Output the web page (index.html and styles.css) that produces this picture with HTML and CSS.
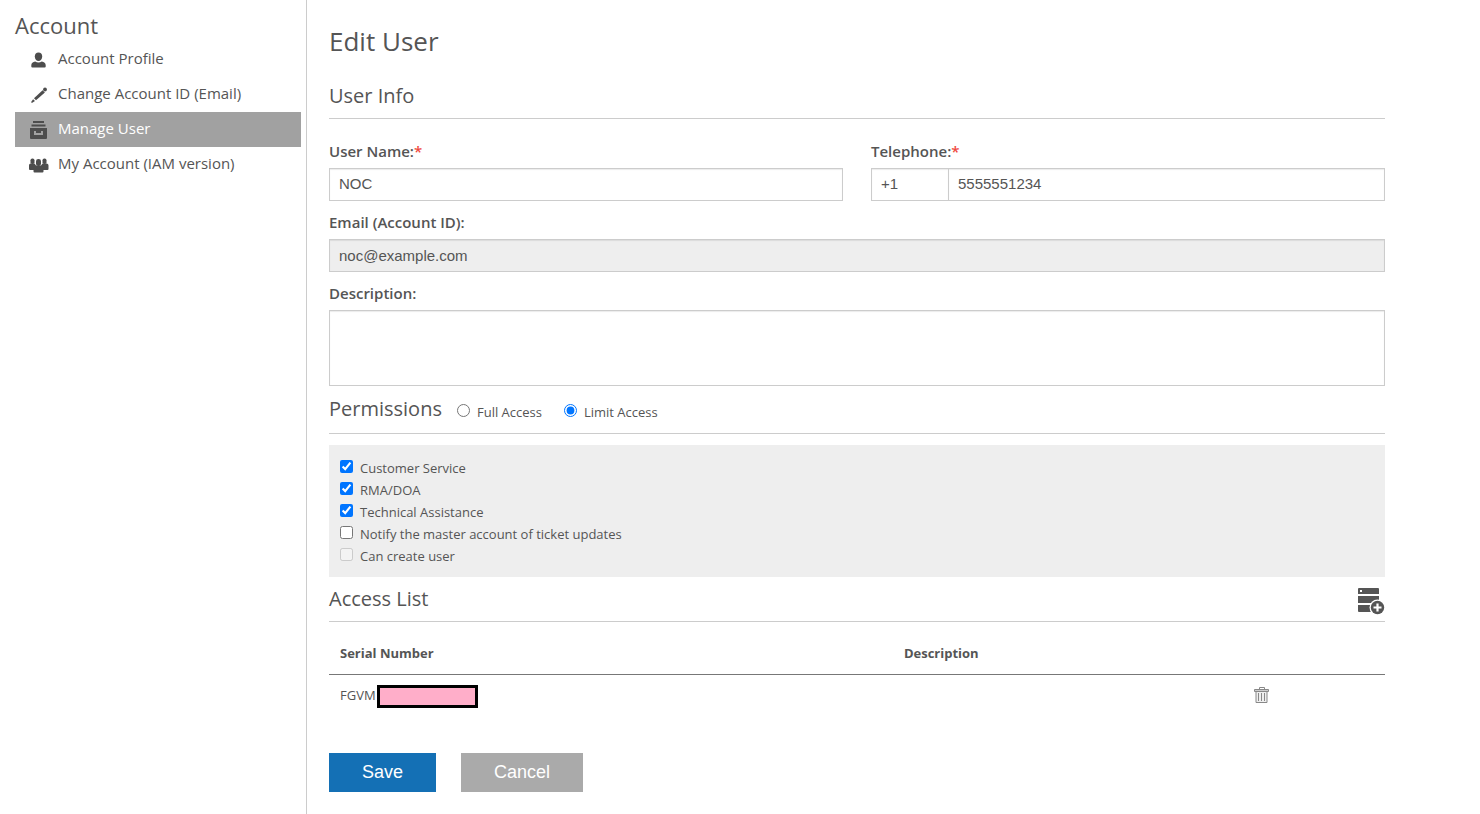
FILE: index.html
```
<!DOCTYPE html>
<html lang="en">

<head>
  <meta charset="UTF-8">
  <meta name="viewport" content="width=device-width, initial-scale=1.0">
  <title>Edit User</title>
  <link rel="stylesheet" href="styles.css">
</head>

<body>
  <div class="page">
    <aside class="sidebar">
      <h3 class="side-title">Account</h3>
      <nav class="side-menu">
        <a href="#" class="side-link">
          <svg class="side-icon" viewBox="0 0 20 20">
            <path d="M9.500 2.500c2.300 0 3.700 1.600 3.700 3.900 0 2.500-1.600 4.600-3.700 4.600S5.800 8.900 5.800 6.400c0-2.300 1.400-3.900 3.700-3.900z" />
            <path d="M2.300 16.500v-1.300c0-2.200 1.600-3.400 3.900-3.700 2 1.300 4.600 1.300 6.600 0 2.300.3 3.900 1.500 3.900 3.700v1.300a1 1 0 0 1-1 1H3.300a1 1 0 0 1-1-1z" />
          </svg>
          Account Profile
        </a>
        <a href="#" class="side-link">
          <svg class="side-icon" viewBox="0 0 20 20">
            <circle cx="16" cy="4.500" r="1.900" />
            <path d="M13.600 5.200l2.300 2.300-8.900 7.700-2-2z" />
            <path d="M4.100 14.200l1.900 1.900-2.700 1.700c-.7.300-1.400-.4-1-1z" />
          </svg>
          Change Account ID (Email)
        </a>
        <a href="#" class="side-link active">
          <svg class="side-icon" viewBox="0 0 20 20">
            <path d="M4 1h11v2H4zM2.500 4.500h14v2h-14z" />
            <path fill-rule="evenodd" d="M1 8h17v10a1 1 0 0 1-1 1H2a1 1 0 0 1-1-1zM5 11v4h9v-4h-2v2H7v-2z" />
          </svg>
          Manage User
        </a>
        <a href="#" class="side-link">
          <svg class="side-icon" viewBox="0 0 20 20">
            <rect x="1.500" y="3.500" width="4" height="5.500" rx="1.800" />
            <rect x="13.500" y="3.500" width="4" height="5.500" rx="1.800" />
            <rect x="7" y="4" width="5" height="7" rx="2.300" />
            <path d="M0 14V10.500C0 9 1 8.500 2 8.500h3.500l1.500 2h5l1.500-2H17c1.200 0 2.500.5 2.500 2V14a1 1 0 0 1-1 1h-4v1.500a1 1 0 0 1-1 1h-8a1 1 0 0 1-1-1V15H1a1 1 0 0 1-1-1z" />
          </svg>
          My Account (IAM version)
        </a>
      </nav>
    </aside>

    <main class="main">
      <form>
        <h1>Edit User</h1>

        <h2 class="section-title">User Info</h2>
        <div class="user-form">
          <div class="form-row">
            <div class="field">
              <label for="username">User Name:<span class="required">*</span></label>
              <input type="text" id="username" value="NOC" />
            </div>
            <div class="field">
              <label for="phone">Telephone:<span class="required">*</span></label>
              <div class="phone">
                <input type="text" class="code" aria-label="Country code" value="+1" />
                <input type="text" id="phone" value="5555551234" />
              </div>
            </div>
          </div>
          <div class="field">
            <label for="email">Email (Account ID):</label>
            <input type="text" id="email" value="noc@example.com" disabled />
          </div>
          <div class="field">
            <label for="description">Description:</label>
            <textarea id="description"></textarea>
          </div>
        </div>

        <div class="section-title permissions">
          <h2>Permissions</h2>
          <label class="option"><input type="radio" name="access" />Full Access</label>
          <label class="option"><input type="radio" name="access" checked />Limit Access</label>
        </div>
        <div class="permission-box">
          <label class="option"><input type="checkbox" checked />Customer Service</label>
          <label class="option"><input type="checkbox" checked />RMA/DOA</label>
          <label class="option"><input type="checkbox" checked />Technical Assistance</label>
          <label class="option"><input type="checkbox" />Notify the master account of ticket updates</label>
          <label class="option"><input type="checkbox" disabled />Can create user</label>
        </div>

        <div class="section-title access">
          <h2>Access List</h2>
          <button type="button" class="icon-btn" aria-label="Add">
            <svg width="28" height="30" viewBox="0 0 28 30">
              <path fill="#555" fill-rule="evenodd" d="M2 3h19a1 1 0 0 1 1 1v5H1V4a1 1 0 0 1 1-1zM3 5v2h2V5z" />
              <path fill="#555" d="M1 11h21v7H1zM1 20h21v7H2a1 1 0 0 1-1-1z" />
              <circle cx="20.500" cy="22.500" r="8" fill="#fff" />
              <circle cx="20.500" cy="22.500" r="6.700" fill="#555" />
              <path stroke="#fff" stroke-width="2.200" d="M20.500 18.500v8M16.500 22.500h8" />
            </svg>
          </button>
        </div>
        <table class="access-table">
          <thead>
            <tr>
              <th class="col-serial">Serial Number</th>
              <th class="col-desc">Description</th>
              <th></th>
            </tr>
          </thead>
          <tbody>
            <tr>
              <td>
                <div class="serial">FGVM<span class="mask"></span></div>
              </td>
              <td></td>
              <td>
                <button type="button" class="icon-btn" aria-label="Delete">
                  <svg width="16" height="18" viewBox="0 0 16 18">
                    <path fill="none" stroke="#888" d="M5.500 3V1.500h5V3" />
                    <path fill="#ccc" stroke="#888" d="M.5 3.500h14v2H.5z" />
                    <path fill="#eee" stroke="#888" d="M2 5.500h11v11H2z" />
                    <path stroke="#888" d="M4.500 7v8M7.500 7v8M10.500 7v8" />
                  </svg>
                </button>
              </td>
            </tr>
          </tbody>
        </table>

        <div class="actions">
          <button type="submit" class="btn save">Save</button>
          <button type="button" class="btn cancel">Cancel</button>
        </div>
      </form>
    </main>
  </div>
</body>

</html>
```
FILE: styles.css
```
* {
  padding: 0;
  margin: 0;
  box-sizing: border-box;
}

body {
  font-family: "Open Sans", "Noto Sans", sans-serif;
  font-size: 13px;
  color: #555;
  background-color: #fff;
}

.page {
  display: flex;
  min-height: 100vh;
}

/* left menu */
.sidebar {
  flex: 0 0 307px;
  padding: 9px 5px 0 15px;
  border-right: 1px solid #ccc;
}

.side-title {
  margin-bottom: 1px;
  font-size: 22px;
  font-weight: 400;
  line-height: 32px;
}

.side-link {
  display: flex;
  align-items: center;
  gap: 9px;
  height: 35px;
  padding: 0 14px 4px;
  font-size: 15px;
  color: #555;
  text-decoration: none;
}

.side-link.active {
  background-color: #a1a1a1;
  color: #fff;
}

.side-icon {
  width: 20px;
  height: 20px;
  margin-top: 4px;
  fill: #4d4d4d;
}

/* content */
.main {
  flex: 1;
  padding: 23px 95px 0 22px;
}

h1 {
  margin-bottom: 23px;
  font-size: 26px;
  font-weight: 400;
  line-height: 36px;
}

h2 {
  font-size: 20px;
  font-weight: 400;
  line-height: 28px;
}

.section-title {
  padding-bottom: 8px;
  border-bottom: 1px solid #ccc;
}

.user-form {
  display: flex;
  flex-direction: column;
  gap: 11px;
  padding: 22px 0 9px;
}

.form-row {
  display: grid;
  grid-template-columns: 1fr 1fr;
  gap: 28px;
}

.field {
  display: flex;
  flex-direction: column;
  gap: 7px;
}

.field label {
  font-size: 15px;
  font-weight: 600;
  line-height: 20px;
}

.required {
  color: #f0483e;
}

input[type=text],
textarea {
  width: 100%;
  height: 33px;
  padding: 0 9px;
  border: 1px solid #ccc;
  box-shadow: inset 0 1px 1px rgba(0, 0, 0, 0.08);
  background-color: #fff;
  font-family: "Liberation Sans", Arial, sans-serif;
  font-size: 15px;
  color: #555;
}

.form-row input[type=text] {
  padding-bottom: 2px;
}

input[type=text]:disabled {
  background-color: #eee;
}

textarea {
  display: block;
  height: 76px;
  resize: none;
}

.phone {
  display: flex;
}

.phone .code {
  flex: 0 0 77px;
  border-right: none;
}

.option {
  display: flex;
  align-items: center;
  gap: 7px;
  padding-top: 2px;
  line-height: 20px;
}

.option input {
  width: 13px;
  height: 13px;
  margin-bottom: 4px;
}

.permissions {
  display: flex;
  align-items: flex-start;
  padding-bottom: 10px;
}

.permissions .option {
  margin: 5px 7px 0 15px;
}

.permission-box {
  margin: 11px 0 8px;
  padding: 11px;
  background-color: #eee;
}

.access {
  display: flex;
  justify-content: space-between;
  padding-bottom: 6px;
}

.icon-btn {
  display: block;
  border: none;
  background: transparent;
  cursor: pointer;
}

.icon-btn svg {
  display: block;
}

/* access list */
.access-table {
  width: 100%;
  margin-top: 11px;
  border-collapse: collapse;
  table-layout: fixed;
}

.access-table th,
.access-table td {
  height: 41px;
  padding: 0 11px;
  text-align: left;
}

.access-table th {
  font-weight: 700;
  border-bottom: 1px solid #777;
}

.col-serial {
  width: 53.4%;
}

.col-desc {
  width: 33.2%;
}

.serial {
  display: flex;
  align-items: center;
}

.mask {
  width: 101px;
  height: 23px;
  margin: 4px 0 0 1px;
  border: 3px solid #000;
  background-color: #ffaec9;
}

.actions {
  display: flex;
  gap: 25px;
  margin-top: 38px;
}

.btn {
  height: 39px;
  padding: 0 33px;
  border: none;
  font-family: "Liberation Sans", Arial, sans-serif;
  font-size: 18px;
  color: #fff;
  cursor: pointer;
}

.save {
  background-color: #1470b5;
}

.cancel {
  background-color: #aaa;
}
```
